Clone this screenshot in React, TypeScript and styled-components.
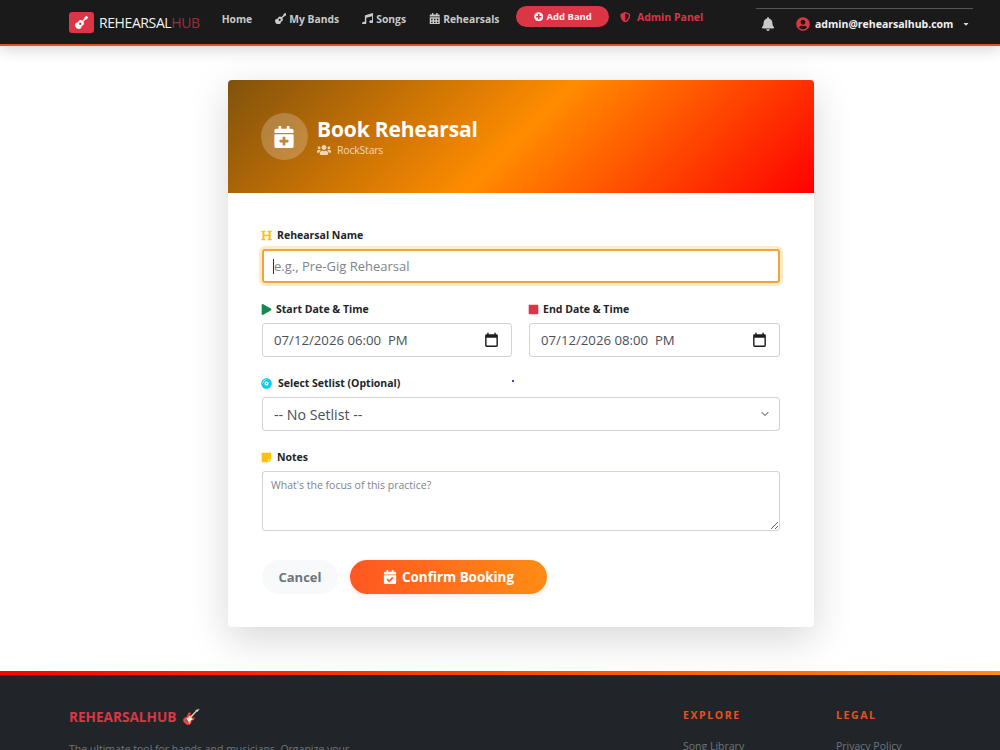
import styled, { createGlobalStyle } from "styled-components";
import {
  FaBell,
  FaCalendarAlt,
  FaCalendarCheck,
  FaCalendarPlus,
  FaCompactDisc,
  FaGuitar,
  FaHeading,
  FaMusic,
  FaPlay,
  FaPlusCircle,
  FaShieldAlt,
  FaStickyNote,
  FaStop,
  FaUserCircle,
  FaUsers,
  FaCaretDown,
} from "react-icons/fa";

const GlobalStyle = createGlobalStyle`
  html, body {
    margin: 0;
    padding: 0;
    background: #fff;
    font-family: "Open Sans", "Liberation Sans", sans-serif;
    color: #212529;
  }
  * { box-sizing: border-box; }
`;

const NavBar = styled.nav`
  height: 46px;
  background: #1a1a1a;
  border-bottom: 2px solid #e8501f;
  box-shadow: 0 4px 14px rgba(0, 0, 0, 0.16);
  display: flex;
  align-items: flex-start;
  padding: 0 27px 0 69px;
  position: relative;
`;

const Brand = styled.div`
  display: flex;
  align-items: center;
  gap: 5px;
  margin-top: 12px;
  margin-right: 22px;
  font-size: 14px;
  line-height: 21px;
  letter-spacing: -0.4px;
  color: #f2f2f2;
`;

const BrandIcon = styled.span`
  width: 25px;
  height: 21px;
  border-radius: 3px;
  background: #dc3545;
  color: #fff;
  display: flex;
  align-items: center;
  justify-content: center;
  font-size: 13px;
`;

const BrandAccent = styled.span`
  color: #a32b38;
`;

const NavLinks = styled.div`
  display: flex;
  align-items: center;
  gap: 22.7px;
  margin-top: 10px;
  height: 17px;
`;

const NavLink = styled.a`
  display: flex;
  align-items: center;
  gap: 3px;
  font-size: 10.3px;
  font-weight: 700;
  color: #c9c9c9;
  white-space: nowrap;
  svg {
    font-size: 11.5px;
  }
`;

const AddBand = styled.a`
  width: 93px;
  height: 21px;
  margin: 6px 0 0 17px;
  border-radius: 11px;
  background: #dc3545;
  color: #f3f3f3;
  display: flex;
  align-items: center;
  justify-content: center;
  gap: 3px;
  font-size: 9.5px;
  font-weight: 700;
`;

const AdminLink = styled.a`
  display: flex;
  align-items: center;
  gap: 6px;
  margin: 9px 0 0 11px;
  height: 16px;
  font-size: 10.5px;
  font-weight: 700;
  color: #dc3545;
`;

const UserArea = styled.div`
  margin-left: auto;
  margin-top: 8px;
  width: 217px;
  height: 30px;
  border-top: 1px solid #555;
  display: flex;
  align-items: center;
  padding-left: 5px;
  color: #f2f2f2;
  font-size: 10.5px;
  font-weight: 700;
`;

const Bell = styled.span`
  display: flex;
  color: #c9c9c9;
  font-size: 14px;
  margin-right: 21px;
`;

const UserIcon = styled.span`
  display: flex;
  color: #dc3545;
  font-size: 14px;
  margin-right: 5px;
`;

const Caret = styled.span`
  display: flex;
  color: #ddd;
  font-size: 8px;
  margin-left: 9px;
`;

const Main = styled.main`
  display: flex;
  justify-content: center;
  padding: 34px 0 44px 42px;
`;

const Card = styled.section`
  width: 586px;
  background: #fff;
  border-radius: 4px;
  box-shadow: 0 12px 40px rgba(0, 0, 0, 0.16);
  overflow: hidden;
`;

const CardHeader = styled.header`
  height: 113px;
  padding: 0 33px;
  background: linear-gradient(135deg, #80520c 0%, #ff8c00 50%, #ff0000 100%);
  display: flex;
  align-items: center;
  gap: 9px;
  color: #fff;
`;

const HeaderIcon = styled.div`
  width: 47px;
  height: 47px;
  border-radius: 50%;
  background: rgba(255, 255, 255, 0.22);
  display: flex;
  align-items: center;
  justify-content: center;
  font-size: 22px;
  padding-right: 2px;
`;

const Title = styled.h1`
  margin: 0;
  font-size: 21px;
  line-height: 25px;
  font-weight: 700;
  letter-spacing: -0.15px;
`;

const Subtitle = styled.div`
  display: flex;
  align-items: center;
  gap: 6px;
  margin-top: 1px;
  font-size: 10.5px;
  line-height: 14px;
  color: rgba(255, 255, 255, 0.72);
  letter-spacing: -0.2px;
  svg {
    font-size: 14px;
  }
`;

const Form = styled.form`
  padding: 35px 34px 33px 34px;
  display: flex;
  flex-direction: column;
  gap: 19px;
`;

const Field = styled.div`
  display: flex;
  flex-direction: column;
  gap: 7px;
  position: relative;
`;

const DateRow = styled.div`
  display: grid;
  grid-template-columns: 250px 251px;
  gap: 17px;
`;

const Label = styled.label<{ $tone: string; $gap?: number }>`
  display: flex;
  align-items: center;
  gap: ${(p) => p.$gap ?? 5}px;
  height: 14px;
  margin-left: -1px;
  font-size: 10.5px;
  font-weight: 700;
  color: #212529;
  svg {
    color: ${(p) => p.$tone};
    font-size: 11px;
  }
`;

const controlCss = `
  width: 100%;
  border: 1px solid #ced4da;
  border-radius: 3px;
  background: #fff;
  font-family: "Open Sans", "Liberation Sans", sans-serif;
  color: #495057;
  outline: none;
`;

const NameWrap = styled.div`
  position: relative;
`;

const NameInput = styled.input`
  ${controlCss}
  display: block;
  height: 34px;
  padding: 0 10px;
  font-size: 13px;
  border: 2px solid #f5a13c;
  box-shadow: 0 0 0 3px rgba(255, 165, 0, 0.22);
  &::placeholder {
    color: #7d848b;
  }
`;

const TextCaret = styled.span`
  position: absolute;
  left: 11px;
  top: 10px;
  width: 1px;
  height: 15px;
  background: #333;
`;

const DateWrap = styled.div`
  position: relative;
  svg {
    position: absolute;
    right: 12px;
    top: 9px;
    pointer-events: none;
  }
`;

const DateInput = styled.input`
  ${controlCss}
  display: block;
  height: 34px;
  padding: 0 11px;
  font-size: 13.2px;
  white-space: pre;
`;

const SelectWrap = styled.div`
  position: relative;
  svg {
    position: absolute;
    right: 10px;
    top: 13px;
    pointer-events: none;
  }
`;

const Select = styled.select`
  ${controlCss}
  display: block;
  height: 34px;
  padding: 0 11px;
  font-size: 14.2px;
  appearance: none;
`;

const Notes = styled.textarea`
  ${controlCss}
  display: block;
  height: 60px;
  padding: 5px 8px;
  font-size: 10.5px;
  line-height: 16px;
  &::placeholder {
    color: #7d848b;
  }
`;

const Actions = styled.div`
  display: flex;
  gap: 12px;
  margin-top: 10px;
`;

const CancelButton = styled.button`
  width: 76px;
  height: 34px;
  border: 0;
  border-radius: 17px;
  background: #f8f9fa;
  color: #6c757d;
  font: 700 13px "Open Sans", "Liberation Sans", sans-serif;
`;

const ConfirmButton = styled.button`
  width: 197px;
  height: 34px;
  border: 0;
  border-radius: 17px;
  background: linear-gradient(90deg, #ff5722, #ff8c14);
  color: #fff;
  font: 700 13.4px "Open Sans", "Liberation Sans", sans-serif;
  display: flex;
  align-items: center;
  justify-content: center;
  gap: 5px;
  box-shadow: 0 2px 6px rgba(255, 87, 34, 0.15);
  svg {
    font-size: 14px;
  }
`;

const StrayDot = styled.span`
  position: absolute;
  left: 250px;
  top: 4px;
  width: 2px;
  height: 2px;
  background: #4a3fb0;
`;

const Footer = styled.footer`
  background: #212529;
  border-top: 4px solid;
  border-image: linear-gradient(90deg, #ff0000, #ff8c14) 1;
  padding: 32px 0 30px 69px;
  display: flex;
  color: #6c757d;
`;

const FooterAbout = styled.div`
  flex: 0 0 614px;
`;

const FooterBrand = styled.div`
  display: flex;
  align-items: center;
  gap: 6px;
  height: 18px;
  font-size: 13.6px;
  font-weight: 700;
  color: #dc3545;
`;

const FooterEmoji = styled.span`
  font-size: 15px;
`;

const FooterText = styled.p`
  margin: 16px 0 0;
  width: 300px;
  font-size: 10.5px;
  line-height: 16px;
`;

const FooterColumn = styled.div`
  flex: 0 0 153px;
`;

const FooterHeading = styled.h2`
  margin: -1px 0 0;
  height: 18px;
  font-size: 10.5px;
  line-height: 18px;
  font-weight: 700;
  letter-spacing: 1.6px;
  color: #e8501f;
`;

const FooterLink = styled.a`
  display: block;
  margin-top: 14px;
  font-size: 10.5px;
  line-height: 16px;
  color: #6c757d;
`;

function CalendarGlyph() {
  return (
    <svg width="17" height="17" viewBox="0 0 24 24" fill="#1d1d1d">
      <path d="M19 3h-1V1h-2v2H8V1H6v2H5a2 2 0 0 0-2 2v14a2 2 0 0 0 2 2h14a2 2 0 0 0 2-2V5a2 2 0 0 0-2-2zm0 16H5V8h14z" />
    </svg>
  );
}

export default function App() {
  return (
    <>
      <GlobalStyle />
      <NavBar>
        <Brand>
          <BrandIcon>
            <FaGuitar />
          </BrandIcon>
          <span>
            REHEARSAL<BrandAccent>HUB</BrandAccent>
          </span>
        </Brand>
        <NavLinks>
          <NavLink>Home</NavLink>
          <NavLink>
            <FaGuitar /> My Bands
          </NavLink>
          <NavLink>
            <FaMusic /> Songs
          </NavLink>
          <NavLink>
            <FaCalendarAlt /> Rehearsals
          </NavLink>
        </NavLinks>
        <AddBand>
          <FaPlusCircle /> Add Band
        </AddBand>
        <AdminLink>
          <FaShieldAlt /> Admin Panel
        </AdminLink>
        <UserArea>
          <Bell>
            <FaBell />
          </Bell>
          <UserIcon>
            <FaUserCircle />
          </UserIcon>
          admin@rehearsalhub.com
          <Caret>
            <FaCaretDown />
          </Caret>
        </UserArea>
      </NavBar>

      <Main>
        <Card>
          <CardHeader>
            <HeaderIcon>
              <FaCalendarPlus />
            </HeaderIcon>
            <div>
              <Title>Book Rehearsal</Title>
              <Subtitle>
                <FaUsers /> RockStars
              </Subtitle>
            </div>
          </CardHeader>
          <Form>
            <Field>
              <Label $tone="#ffc107">
                <FaHeading /> Rehearsal Name
              </Label>
              <NameWrap>
                <NameInput placeholder="e.g., Pre-Gig Rehearsal" />
                <TextCaret />
              </NameWrap>
            </Field>
            <DateRow>
              <Field>
                <Label $tone="#198754" $gap={4}>
                  <FaPlay /> Start Date &amp; Time
                </Label>
                <DateWrap>
                  <DateInput defaultValue="07/12/2026 06:00  PM" />
                  <CalendarGlyph />
                </DateWrap>
              </Field>
              <Field>
                <Label $tone="#dc3545" $gap={4}>
                  <FaStop /> End Date &amp; Time
                </Label>
                <DateWrap>
                  <DateInput defaultValue="07/12/2026 08:00  PM" />
                  <CalendarGlyph />
                </DateWrap>
              </Field>
            </DateRow>
            <Field>
              <StrayDot />
              <Label $tone="#0dcaf0" $gap={6}>
                <FaCompactDisc /> Select Setlist (Optional)
              </Label>
              <SelectWrap>
                <Select defaultValue="">
                  <option value="">-- No Setlist --</option>
                </Select>
                <svg width="10" height="8" viewBox="0 0 16 16" fill="none" stroke="#343a40" strokeWidth="2" strokeLinecap="round" strokeLinejoin="round">
                  <path d="M2 5l6 6 6-6" />
                </svg>
              </SelectWrap>
            </Field>
            <Field>
              <Label $tone="#ffc107">
                <FaStickyNote /> Notes
              </Label>
              <Notes placeholder="What's the focus of this practice?" />
            </Field>
            <Actions>
              <CancelButton type="button">Cancel</CancelButton>
              <ConfirmButton type="button">
                <FaCalendarCheck /> Confirm Booking
              </ConfirmButton>
            </Actions>
          </Form>
        </Card>
      </Main>

      <Footer>
        <FooterAbout>
          <FooterBrand>
            REHEARSALHUB <FooterEmoji>🎸</FooterEmoji>
          </FooterBrand>
          <FooterText>
            The ultimate tool for bands and musicians. Organize your rehearsals, songs and setlists in one place.
          </FooterText>
        </FooterAbout>
        <FooterColumn>
          <FooterHeading>EXPLORE</FooterHeading>
          <FooterLink>Song Library</FooterLink>
        </FooterColumn>
        <FooterColumn>
          <FooterHeading>LEGAL</FooterHeading>
          <FooterLink>Privacy Policy</FooterLink>
        </FooterColumn>
      </Footer>
    </>
  );
}
